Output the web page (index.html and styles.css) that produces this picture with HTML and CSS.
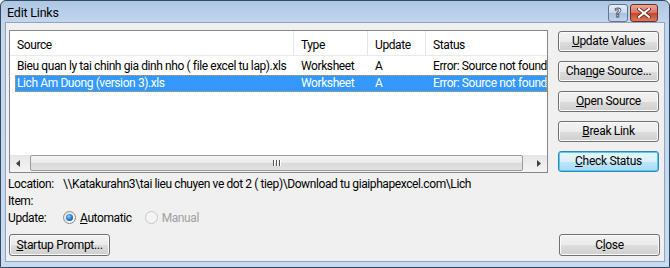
FILE: index.html
```html
<!DOCTYPE html>
<html lang="en">
<head>
    <meta charset="UTF-8">
    <title>Edit Links</title>
    <link rel="stylesheet" href="styles.css">
</head>
<body>
    <div class="window">
        <!-- Title bar -->
        <div class="titlebar">
            <span class="title">Edit Links</span>
            <div class="caption-buttons">
                <div class="cap-btn help"><span>?</span></div>
                <div class="cap-btn close">
                    <svg width="14" height="10" viewBox="0 0 14 10">
                        <path d="M2 1 L12 9 M12 1 L2 9" stroke="#5a2418" stroke-width="3.6" stroke-linecap="square"/>
                        <path d="M2 1 L12 9 M12 1 L2 9" stroke="#ffffff" stroke-width="2" stroke-linecap="square"/>
                    </svg>
                </div>
            </div>
        </div>

        <div class="client">
            <div class="main">
                <!-- Links list -->
                <div class="listbox">
                    <div class="list-header">
                        <div class="col">Source</div>
                        <div class="col">Type</div>
                        <div class="col">Update</div>
                        <div class="col">Status</div>
                    </div>
                    <div class="list-row">
                        <div class="cell">Bieu quan ly tai chinh gia dinh nho ( file excel tu lap).xls</div>
                        <div class="cell">Worksheet</div>
                        <div class="cell">A</div>
                        <div class="cell">Error: Source not found</div>
                    </div>
                    <div class="list-row selected">
                        <div class="cell">Lich Am Duong (version 3).xls</div>
                        <div class="cell">Worksheet</div>
                        <div class="cell">A</div>
                        <div class="cell">Error: Source not found</div>
                    </div>
                    <div class="list-fill"></div>
                    <div class="hscroll">
                        <div class="arrow">
                            <svg width="5" height="7" viewBox="0 0 5 7"><path d="M4 0 L0 3.5 L4 7 Z" fill="#404040"/></svg>
                        </div>
                        <div class="thumb">
                            <span class="grip"></span><span class="grip"></span><span class="grip"></span>
                        </div>
                        <div class="arrow">
                            <svg width="5" height="7" viewBox="0 0 5 7"><path d="M1 0 L5 3.5 L1 7 Z" fill="#404040"/></svg>
                        </div>
                    </div>
                </div>

                <!-- Action buttons -->
                <div class="actions">
                    <button type="button" class="btn"><u>U</u>pdate Values</button>
                    <button type="button" class="btn">Cha<u>n</u>ge Source...</button>
                    <button type="button" class="btn"><u>O</u>pen Source</button>
                    <button type="button" class="btn"><u>B</u>reak Link</button>
                    <button type="button" class="btn default"><u>C</u>heck Status</button>
                </div>
            </div>

            <!-- Details -->
            <div class="details">
                <div class="detail-row">
                    <span class="label">Location:</span>
                    <span>\\Katakurahn3\tai lieu chuyen ve dot 2 ( tiep)\Download tu giaiphapexcel.com\Lich</span>
                </div>
                <div class="detail-row">
                    <span class="label">Item:</span>
                </div>
                <div class="detail-row">
                    <span class="label">Update:</span>
                    <span class="radio checked"><span class="dot"></span></span>
                    <span class="radio-label"><u>A</u>utomatic</span>
                    <span class="radio disabled"></span>
                    <span class="radio-label disabled">Manual</span>
                </div>
            </div>

            <div class="footer">
                <button type="button" class="btn"><u>S</u>tartup Prompt...</button>
                <button type="button" class="btn">C<u>l</u>ose</button>
            </div>
        </div>
    </div>
</body>
</html>
```

FILE: styles.css
```css
/* General styling */
body {
    margin: 0;
    font-family: 'Roboto', 'Noto Sans', sans-serif;
    font-size: 12px;
    letter-spacing: -0.4px;
    color: #000000;
    background-color: #f0f0f0;
}

u {
    text-decoration: underline;
    text-underline-offset: 1px;
}

/* Window frame */
.window {
    width: 670px;
    height: 268px;
    box-sizing: border-box;
    border: 1px solid #344a62;
    border-radius: 6px 6px 0 0;
    background: linear-gradient(to bottom, #aec7e4 0px, #c3d6ec 22px, #c9dbee 100%);
    display: flex;
    flex-direction: column;
}

.titlebar {
    height: 21px;
    display: flex;
    align-items: center;
    justify-content: space-between;
    padding-left: 6px;
}

.title {
    font-size: 12.5px;
    letter-spacing: -0.2px;
    padding-top: 2px;
}

.caption-buttons {
    display: flex;
    gap: 2px;
    margin-right: 11px;
    padding-top: 2px;
}

.cap-btn {
    height: 16px;
    border: 1px solid #5f7591;
    border-radius: 3px;
    display: flex;
    align-items: center;
    justify-content: center;
}

.cap-btn.help {
    width: 18px;
    background: linear-gradient(to bottom, #e6eef8 0%, #c9d8ec 50%, #aac0dc 51%, #c3d5ea 100%);
}

.cap-btn.help span {
    font-family: 'DejaVu Sans', sans-serif;
    font-weight: bold;
    font-size: 12px;
    letter-spacing: 0;
    color: #ffffff;
    -webkit-text-stroke: 0.8px #3b4d66;
    line-height: 14px;
}

.cap-btn.close {
    width: 26px;
    border-color: #6e2e22;
    background: linear-gradient(to bottom, #eaa898 0%, #d9725e 50%, #c4452c 51%, #d97a5e 100%);
}

/* Client area */
.client {
    flex: 1;
    margin: 0 4px 5px 4px;
    border: 1px solid #8ea4c0;
    background-color: #f0f0f0;
    padding: 7px 4px 5px 3px;
    display: flex;
    flex-direction: column;
}

.main {
    display: flex;
    gap: 10px;
}

/* List view */
.listbox {
    width: 539px;
    height: 143px;
    box-sizing: border-box;
    border: 1px solid #828790;
    background-color: #ffffff;
    display: flex;
    flex-direction: column;
    overflow: hidden;
}

.list-header {
    display: grid;
    grid-template-columns: 284px 74px 58px 1fr;
    height: 24px;
    border-bottom: 1px solid #e8eaed;
    margin-bottom: 2px;
}

.list-header .col {
    padding: 7px 0 0 7px;
    border-right: 1px solid #e3e5e8;
    white-space: nowrap;
}

.list-header .col:last-child {
    border-right: none;
}

.list-row {
    display: grid;
    grid-template-columns: 279px 74px 58px 1fr;
    height: 17px;
    margin-left: 5px;
    line-height: 17px;
    white-space: nowrap;
}

.list-row .cell {
    padding-left: 7px;
    overflow: hidden;
}

.list-row .cell:first-child {
    padding-left: 2px;
}

.list-row.selected {
    background-color: #3399ff;
    color: #ffffff;
    outline: 1px dotted #d9974a;
    outline-offset: -1px;
}

.list-fill {
    flex: 1;
}

/* Horizontal scroll bar */
.hscroll {
    height: 17px;
    display: flex;
    align-items: stretch;
    background: linear-gradient(to bottom, #e6e6e6, #f4f4f4);
}

.hscroll .arrow {
    width: 17px;
    display: flex;
    align-items: center;
    justify-content: center;
}

.hscroll .thumb {
    flex: 1;
    margin: 0 7px 1px 3px;
    border: 1px solid #9a9a9a;
    border-radius: 2px;
    background: linear-gradient(to bottom, #f5f5f5 0%, #eaeaea 50%, #d9d9d9 51%, #e2e2e2 100%);
    display: flex;
    justify-content: center;
    align-items: center;
    gap: 2px;
}

.grip {
    width: 1px;
    height: 6px;
    background-color: #555555;
    box-shadow: 1px 0 0 #ffffff;
}

/* Buttons */
.actions {
    display: flex;
    flex-direction: column;
    gap: 9px;
    margin-top: 1px;
}

.btn {
    width: 101px;
    height: 21px;
    box-sizing: border-box;
    border: 1px solid #707070;
    border-radius: 3px;
    box-shadow: inset 0 0 0 1px #fbfbfb;
    background: linear-gradient(to bottom, #f2f2f2 0%, #ebebeb 50%, #dddddd 51%, #cfcfcf 100%);
    font-family: 'Roboto', 'Noto Sans', sans-serif;
    font-size: 12px;
    letter-spacing: -0.3px;
    color: #000000;
    padding: 0;
    line-height: 17px;
}

.btn.default {
    border-color: #3c7fb1;
    box-shadow: inset 0 0 0 1px #48d0f6;
    background: linear-gradient(to bottom, #eaf6fd 0%, #d9f0fc 50%, #bee6fd 51%, #a7d9f5 100%);
}

/* Details */
.details {
    margin-top: 2px;
    margin-left: -1px;
}

.detail-row {
    height: 17px;
    display: flex;
    align-items: center;
    white-space: nowrap;
}

.label {
    width: 55px;
    flex-shrink: 0;
}

.radio {
    width: 13px;
    height: 13px;
    box-sizing: border-box;
    border-radius: 50%;
    border: 1px solid #8a8a8a;
    background: linear-gradient(to bottom right, #dcdcdc, #ffffff);
    display: flex;
    align-items: center;
    justify-content: center;
}

.radio .dot {
    width: 7px;
    height: 7px;
    border-radius: 50%;
    background: radial-gradient(circle at 40% 35%, #8fd0ff 0%, #2a86d8 45%, #0f3f7e 100%);
}

.radio.disabled {
    border-color: #c9c9c9;
    background: #f4f4f4;
    margin-left: 13px;
}

.radio-label {
    margin-left: 4px;
}

.radio-label.disabled {
    color: #a0a0a0;
}

/* Footer */
.footer {
    margin-top: auto;
    display: flex;
    justify-content: space-between;
}

.footer .btn {
    height: 22px;
}
```
